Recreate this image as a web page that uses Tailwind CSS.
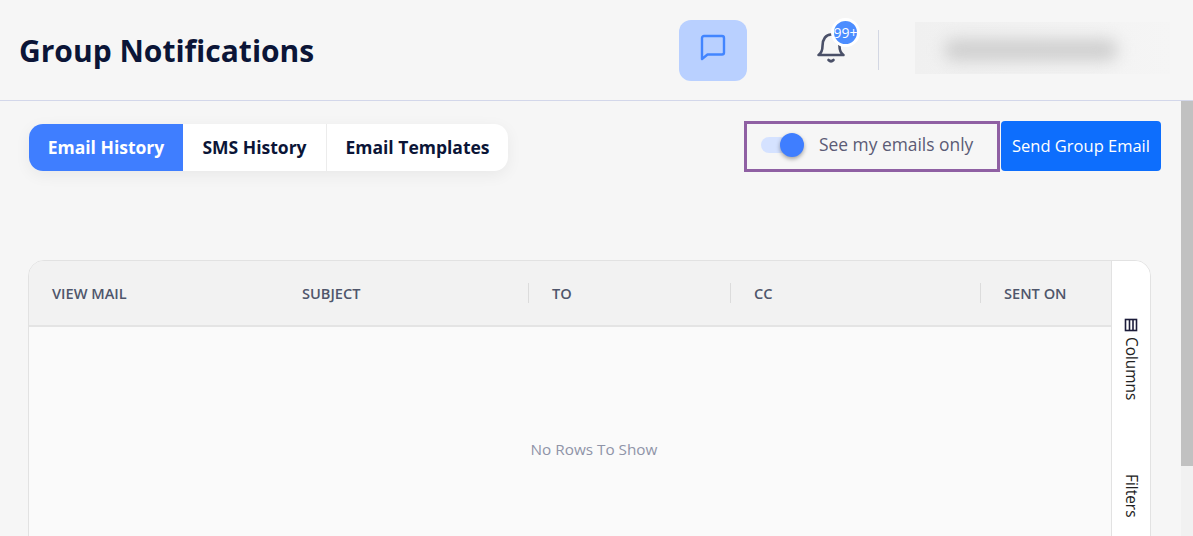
<!DOCTYPE html>
<html lang="en">
  <head>
    <meta charset="UTF-8" />
    <title>Group Notifications</title>
    <script src="https://cdn.jsdelivr.net/npm/@tailwindcss/browser@4"></script>
  </head>

  <body class="bg-[#f6f6f6] font-['Open_Sans',sans-serif] h-[536px] overflow-hidden">
    <!-- Header -->
    <header class="h-[101px] border-b border-[#d3d7ea] flex items-center relative">
      <h1 class="ml-[19px] mt-[2px] text-[30px] leading-[40px] font-bold text-[#0b1537] w-[660px]">Group Notifications</h1>
      <button class="w-[68px] h-[61px] rounded-[12px] bg-[#b9d0ff] flex items-center justify-center">
        <svg width="28" height="28" viewBox="0 0 28 28" fill="none" stroke="#4285ff" stroke-width="2.4" stroke-linejoin="round" class="mb-[7px]">
          <path d="M3 5a2 2 0 0 1 2-2h18a2 2 0 0 1 2 2v14.500a2 2 0 0 1-2 2H8.500L3 26z" />
        </svg>
      </button>
      <div class="relative ml-[69px] w-[30px] h-[36px] -mt-[4px]">
        <svg width="30" height="36" viewBox="0 0 30 36" fill="none" stroke="#4a5068" stroke-width="2.6" stroke-linecap="round" stroke-linejoin="round">
          <path d="M2.500 25c3-2 4-4 4-9 0-7 3.500-11.500 8.500-11.500s8.500 4.500 8.500 11.500c0 5 1 7 4 9z" />
          <path d="M12.500 30c1.500 1.500 3.500 1.500 5 0" />
        </svg>
        <span class="absolute left-[15px] -top-[12px] w-[29px] h-[29px] rounded-full bg-[#4c8dff] border-[3px] border-white text-white text-[14px] flex items-center justify-center whitespace-nowrap overflow-hidden">99+</span>
      </div>
      <div class="ml-[32px] w-px h-[40px] bg-[#d3d7e3]"></div>
      <!-- Blurred user name -->
      <div class="ml-[36px] w-[255px] h-[52px] overflow-hidden relative -mt-[5px] bg-linear-to-r from-[#f0f0f0] to-[#f5f5f5]">
        <div class="absolute left-[29px] top-[17px] w-[174px] h-[22px] rounded-full bg-[#cfcfcf] blur-[8px]"></div>
      </div>
    </header>

    <div class="flex h-[435px]">
      <main class="w-[1181px] overflow-hidden">
        <!-- Toolbar -->
        <div class="flex items-start pt-[20px] pl-[29px] pr-[20px] h-[159px]">
          <div class="flex h-[47px] mt-[3px] rounded-[14px] bg-white shadow-[0_4px_16px_rgba(0,0,0,0.06)] overflow-hidden text-[17.5px] font-bold text-[#0b1537]">
            <a class="w-[154px] flex items-center justify-center bg-[#3f7eff] text-white">Email History</a>
            <a class="w-[144px] flex items-center justify-center border-r border-[#ececec]">SMS History</a>
            <a class="w-[181px] flex items-center justify-center">Email Templates</a>
          </div>
          <label class="ml-[236px] w-[256px] h-[51px] border-[3px] border-[#8f60a3] flex items-center">
            <span class="relative ml-[14px] w-[32px] h-[16px] rounded-full bg-[#d5e2ff] -mt-[3px]">
              <span class="absolute left-[19px] -top-[4px] w-[24px] h-[24px] rounded-full bg-[#3f7eff] shadow-[0_2px_4px_rgba(0,0,0,0.35)]"></span>
            </span>
            <span class="ml-[26px] text-[17.4px] text-[#5b5b75] -mt-[4px]">See my emails only</span>
          </label>
          <button class="ml-px w-[160px] h-[50px] rounded-[4px] bg-[#0d6efd] text-white text-[16.5px]">Send Group Email</button>
        </div>

        <!-- Grid -->
        <section class="ml-[28px] w-[1123px] h-[300px] border border-[#e2e2e2] rounded-tl-[16px] rounded-tr-[16px] flex overflow-hidden bg-[#fafafa]">
          <div class="flex-1 flex flex-col">
            <div class="h-[66px] bg-[#f2f2f2] border-b-2 border-[#e4e4e4] flex items-center text-[14.600px] leading-[20px] font-semibold text-[#4f566b]">
              <div class="w-[250px] h-[20px] pl-[23px]">VIEW MAIL</div>
              <div class="w-[250px] h-[20px] pl-[23px] border-r border-[#dcdcdc]">SUBJECT</div>
              <div class="w-[201px] h-[20px] pl-[23px]">TO</div>
              <div class="w-[251px] h-[20px] pl-[23px] border-l border-r border-[#dcdcdc]">CC</div>
              <div class="h-[20px] pl-[23px] whitespace-nowrap">SENT ON</div>
            </div>
            <div class="flex-1 text-center pt-[112px] pl-[48px] text-[15.3px] leading-[20px] text-[#8f94a8]">No Rows To Show</div>
          </div>
          <!-- Side bar -->
          <aside class="w-[39px] bg-white border-l border-[#e2e2e2] relative text-[15.400px] text-[#222]">
            <div class="absolute left-[10px] top-[57px] [writing-mode:vertical-rl] flex items-center gap-[5px] leading-[18px]">
              <svg width="14" height="14" viewBox="0 0 14 14" class="rotate-90" fill="none" stroke="#1c1c3a" stroke-width="1.600">
                <rect x="1.500" y="1.500" width="11" height="11" />
                <path d="M1.500 5h11M1.500 8.500h11" />
              </svg>
              <span>Columns</span>
            </div>
            <div class="absolute left-[10px] top-[213px] [writing-mode:vertical-rl] leading-[18px]">Filters</div>
          </aside>
        </section>
      </main>
      <!-- Scrollbar -->
      <div class="w-[12px] bg-[#f1f1f1]">
        <div class="w-full h-[365px] bg-[#c1c1c1]"></div>
      </div>
    </div>
  </body>
</html>
